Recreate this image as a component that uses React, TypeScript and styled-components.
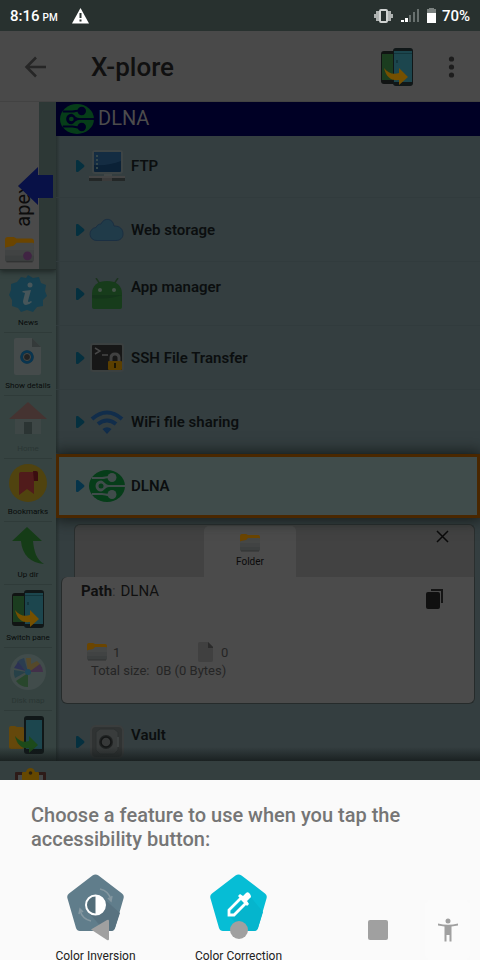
import React from "react";
import styled, { createGlobalStyle } from "styled-components";

const GlobalStyle = createGlobalStyle`
  *, *::before, *::after { box-sizing: border-box; }
  body { margin: 0; background: #fafafa; font-family: Roboto, "Noto Sans", sans-serif; }
  button { font: inherit; color: inherit; border: 0; padding: 0; margin: 0; background: none; }
  h1, h2, p { margin: 0; }
  svg { display: block; flex: none; }
`;

const Screen = styled.div`
  display: flex;
  flex-direction: column;
  height: 100vh;
  overflow: hidden;
`;

const StatusBar = styled.header`
  display: flex;
  align-items: center;
  flex: none;
  height: 31px;
  padding: 0 10px;
  background: #28312f;
  color: #fff;
  font-size: 14px;
  font-weight: 500;
`;

const Clock = styled.span`
  display: flex;
  align-items: baseline;
  gap: 3px;
  margin-right: 14px;
  font-size: 15px;
  small { font-size: 10px; }
`;

const StatusIcons = styled.div`
  display: flex;
  align-items: center;
  gap: 8px;
  margin-left: auto;
`;

const Charge = styled.span`
  margin-left: -2px;
  font-size: 15px;
`;

const AppBar = styled.div`
  display: flex;
  align-items: center;
  flex: none;
  height: 71px;
  padding: 0 20px 0 24px;
  background: #494949;
  box-shadow: inset 0 -1px 0 #424242;
  color: #222;
`;

const AppTitle = styled.h1`
  flex: 1;
  margin-left: 44px;
  font-size: 26px;
  font-weight: 500;
  line-height: 32px;
  color: #101010;
`;

const SwitchButton = styled.button`
  margin-right: 27px;
`;

const Main = styled.main`
  position: relative;
  display: grid;
  grid-template-columns: 56px 1fr;
  flex: 1;
  min-height: 0;
  overflow: hidden;
  &::after {
    content: "";
    position: absolute;
    inset: auto 0 0 0;
    height: 14px;
    background: linear-gradient(rgba(20, 26, 26, 0), rgba(20, 26, 26, 0.8));
  }
`;

const Sidebar = styled.nav`
  background: #364341;
  overflow: hidden;
`;

const OtherPane = styled.button`
  position: relative;
  display: flex;
  flex-direction: column;
  align-items: center;
  justify-content: flex-end;
  width: 39px;
  height: 167px;
  padding-bottom: 6px;
  gap: 10px;
  background: #4a4a4a;
  color: #0c0c0c;
`;

const PaneStrip = styled.div`
  position: relative;
  background: #2d3836;
  border-bottom: 1px solid #242d2b;
  height: 168px;
  box-shadow: 0 2px 5px #1f2726;
`;

const VerticalName = styled.span`
  writing-mode: vertical-rl;
  transform: rotate(180deg);
  font-size: 20px;
  line-height: 24px;
  margin-left: 6px;
`;

const PaneArrow = styled.span`
  position: absolute;
  left: 18px;
  top: 65px;
`;

const Tool = styled.button<{ $dim?: boolean }>`
  display: flex;
  flex-direction: column;
  align-items: center;
  width: 100%;
  height: 63px;
  padding-top: 5px;
  background: linear-gradient(#2f3b39, #2f3b39) center bottom / 48px 1px no-repeat;
  font-size: 8px;
  line-height: 12px;
  gap: 4px;
  white-space: nowrap;
  color: ${(p) => (p.$dim ? "#2a3634" : "#080b0b")};
`;

const Pane = styled.section`
  min-width: 0;
  overflow: hidden;
  background: linear-gradient(90deg, #273130, #343e40 4px);
`;

const PaneTitle = styled.h2`
  position: relative;
  z-index: 1;
  display: flex;
  align-items: center;
  gap: 4px;
  height: 34px;
  padding-left: 4px;
  background: #000025;
  color: #4c4c4c;
  font-size: 20px;
  font-weight: 400;
  line-height: 24px;
`;

const TitleText = styled.span`
  padding-bottom: 3px;
`;

const List = styled.div`
  margin-top: -2px;
`;

const Row = styled.button<{ $selected?: boolean }>`
  position: relative;
  display: flex;
  align-items: center;
  width: 100%;
  height: 64px;
  padding-left: ${(p) => (p.$selected ? "17px" : "20px")};
  text-align: left;
  color: #0b0e0f;
  background: ${(p) => (p.$selected ? "#404c4b" : "transparent")};
  border: ${(p) => (p.$selected ? "3px solid #4a2700" : "0 solid")};
  box-shadow: ${(p) => (p.$selected ? "0 0 14px 2px #141b1a" : "inset 0 -1px 0 #313b3d")};
`;

const RowIcon = styled.span`
  display: flex;
  justify-content: center;
  width: 36px;
  margin: 0 6px 0 4px;
`;

const RowText = styled.span`
  display: flex;
  flex-direction: column;
  font-size: 15px;
  font-weight: 600;
  line-height: 18px;
`;

const RowNote = styled.span`
  height: 14px;
`;

const Details = styled.section`
  padding: 6px 5px;
`;

const TabStrip = styled.div`
  display: flex;
  align-items: flex-start;
  height: 53px;
  margin-left: 13px;
  padding: 1px 25px 0 129px;
  background: #424242;
  border: 1px solid #2a2f2f;
  border-width: 1px 1px 0 1px;
  border-radius: 6px 6px 0 0;
`;

const Tab = styled.button`
  display: flex;
  flex-direction: column;
  align-items: center;
  gap: 3px;
  width: 92px;
  height: 51px;
  padding-top: 8px;
  border-radius: 5px 5px 0 0;
  background: #4b4b4b;
  font-size: 10px;
  line-height: 14px;
  color: #0a0a0a;
`;

const CloseButton = styled.button`
  margin: 4px 0 0 auto;
`;

const DetailsBody = styled.div`
  height: 127px;
  padding: 4px 27px 0 19px;
  background: #4b4b4b;
  border: 1px solid #262b2b;
  border-top: 0;
  border-radius: 6px 0 6px 6px;
  color: #252525;
  font-size: 13px;
`;

const PathRow = styled.div`
  display: flex;
  justify-content: space-between;
  font-size: 15px;
  line-height: 20px;
  height: 36px;
`;

const Path = styled.p`
  color: #101010;
  span { color: #303030; margin-right: 1px; }
`;

const Counts = styled.div`
  display: grid;
  grid-template-columns: 110px 1fr;
  height: 20px;
  margin: 25px 0 0 6px;
`;

const Count = styled.span`
  display: flex;
  align-items: center;
  gap: 6px;
`;

const Total = styled.p`
  margin-left: 10px;
  line-height: 18px;
`;

const BottomBar = styled.div`
  flex: none;
  height: 19px;
  padding: 7px 15px 0;
  background: #343f3f;
  overflow: hidden;
`;

const Sheet = styled.section`
  position: relative;
  flex: none;
  height: 180px;
  padding-top: 23px;
  background: #fafafa;
  overflow: hidden;
`;

const SheetTitle = styled.h2`
  padding: 0 31px;
  font-size: 20px;
  font-weight: 500;
  line-height: 24px;
  color: #757575;
`;

const Choices = styled.div`
  display: grid;
  grid-template-columns: repeat(3, 1fr);
  padding: 23px 27px 0 24px;
`;

const Choice = styled.button`
  display: flex;
  flex-direction: column;
  align-items: center;
  gap: 16px;
  font-size: 12px;
  line-height: 16px;
  color: #212121;
`;

const NavBar = styled.nav`
  position: absolute;
  inset: auto 0 0 0;
  display: grid;
  grid-template-columns: repeat(3, 1fr);
  align-items: center;
  justify-items: center;
  height: 60px;
  padding: 0 33px 0 31px;
`;

const AccessButton = styled.button`
  position: absolute;
  right: 10px;
  bottom: 0;
  display: flex;
  align-items: center;
  justify-content: center;
  width: 45px;
  height: 60px;
  border-radius: 6px;
  background: #fbfbfb;
`;

const PhonesIcon = ({ size = 38 }: { size?: number }) => (
  <svg width={size} height={size} viewBox="0 0 38 38">
    <rect x="3" y="3" width="20" height="33" rx="3" fill="#111413" />
    <rect x="4" y="6" width="18" height="26" fill="#1b3d1f" />
    <rect x="15" y="0" width="20" height="38" rx="3" fill="#101718" />
    <rect x="16" y="3" width="18" height="31" fill="#1c464e" />
    <path d="M16 6h18v-1H16zM18 12h2v3h-2z" fill="#13353b" />
    <path d="M6 20c4 5 9 7 15 5v-5l9 9-9 8v-5C13 33 8 29 6 20z" fill="#755000" />
  </svg>
);

const DlnaIcon = ({ w, h, bg }: { w: number; h: number; bg: string }) => (
  <svg width={w} height={h} viewBox="0 0 36 32" preserveAspectRatio="none">
    <ellipse cx="18" cy="16" rx="18" ry="16" fill="#063d19" />
    <g fill="none" stroke={bg} strokeWidth="2">
      <path d="M3 8h10c3 0 4-1 7-1" />
      <path d="M3 24h10c3 0 4 1 7 1" />
      <path d="M15 16h21" />
    </g>
    <g fill={bg}>
      <circle cx="23" cy="7.500" r="4.500" />
      <circle cx="23" cy="24.500" r="4.500" />
      <path d="M12 10.500a5.500 5.500 0 1 0 0 11c3 0 4-4.500 8-4.500v-2c-4 0-5-4.500-8-4.500z" />
    </g>
    <circle cx="12" cy="16" r="2.500" fill="#063d19" />
  </svg>
);

const FolderIcon = ({ w = 20, mark }: { w?: number; mark?: boolean }) => (
  <svg width={w} height={w * 0.9} viewBox="0 0 20 18">
    <path d="M0 2q0-2 2-2h4l2 1h10q2 0 2 2v6H0z" fill="#6b4500" />
    <path d="M0 8q0-1 1-1l5-1 2-2h11q1 0 1 1v10q0 2-2 2H2q-2 0-2-2z" fill="#454746" />
    <path d="M0 9h20v6q0 2-2 2H2q-2 0-2-2z" fill="#414343" />
    <path d="M0 13h20v2q0 2-2 2H2q-2 0-2-2z" fill="#3c3f3f" />
    <path d="M1 17h18" stroke="#313333" strokeWidth="1" />
    {mark && <circle cx="15.500" cy="13" r="3" fill="#402443" />}
  </svg>
);

const FileIcon = () => (
  <svg width="18" height="20" viewBox="0 0 18 20">
    <path d="M1 2q0-2 2-2h8l5 5v13q0 2-2 2H3q-2 0-2-2z" fill="#404040" />
    <path d="M11 0l5 5v1h-5z" fill="#2b2b2b" />
  </svg>
);

const NewsIcon = () => (
  <svg width="38" height="38" viewBox="0 0 38 38">
    <path d="M19 0l5 3 6-1 2 6 5 2-1 6 2 5-4 4v6l-6 1-4 5-6-2-6 2-3-4-6-2v-6l-3-5 2-5 0-6 6-2 4-5 5 1z" fill="#163f4f" />
    <g fill="#47565a">
      <circle cx="21" cy="10" r="2.500" />
      <path d="M14 16l8-1-3 11q0 2 3 0l1 1q-3 3-6 3t-3-4l2-8-3-1z" />
    </g>
  </svg>
);

const DetailsIcon = () => (
  <svg width="38" height="38" viewBox="0 0 38 38">
    <path d="M5 2q0-2 2-2h16l9 9v26q0 2-2 2H7q-2 0-2-2z" fill="#454b4b" />
    <path d="M23 0l9 9h-9z" fill="#343a3a" />
    <circle cx="18" cy="19" r="6.500" fill="#292c2d" />
    <circle cx="18" cy="19" r="5.500" fill="none" stroke="#083550" strokeWidth="2.500" />
    <circle cx="18" cy="19" r="3.500" fill="#222" stroke="#454b4b" />
  </svg>
);

const HomeIcon = () => (
  <svg width="38" height="38" viewBox="0 0 38 38">
    <path d="M6 17h26v16H6z" fill="#3e4746" />
    <path d="M19 1l19 17H0z" fill="#453331" />
    <path d="M15 21h8v12h-8z" fill="#2b3433" />
  </svg>
);

const BookmarkIcon = () => (
  <svg width="38" height="38" viewBox="0 0 38 38">
    <circle cx="19" cy="19" r="19" fill="#50430f" />
    <path d="M11 8h14v22l-7-5-8 6V10q0-2 2-2z" fill="#501b1b" />
    <path d="M24 7h3q2 0 2 2v8h-4z" fill="#3b0d10" />
  </svg>
);

const UpIcon = () => (
  <svg width="38" height="38" viewBox="0 0 38 38">
    <path d="M18 0l15 14h-9c1 10 3 18 11 23C22 36 13 28 12 14H3z" fill="#153c17" />
  </svg>
);

const DiskMapIcon = () => (
  <svg width="38" height="38" viewBox="0 0 38 38">
    <circle cx="19" cy="19" r="18" fill="#414c4b" />
    <path d="M19 19L8 9A15 15 0 0 1 15 5z" fill="#2b3d50" />
    <path d="M19 19L17 5l5 0 0 6 6-3 3 3-8 7z" fill="#55492a" />
    <path d="M20 19h14a15 15 0 0 0-3-8z" fill="#42304a" />
    <path d="M19 20v14A15 15 0 0 1 7 28z" fill="#28462c" />
    <path d="M17 19L6 25a15 15 0 0 1-1-8z" fill="#274148" />
    <path d="M17 18L5 15l4-6z" fill="#2c3154" />
    <circle cx="19" cy="19" r="3" fill="#1f4759" />
  </svg>
);

const CloneIcon = () => (
  <svg width="38" height="38" viewBox="0 0 38 38">
    <rect x="15" y="0" width="20" height="38" rx="3" fill="#101718" />
    <rect x="17" y="4" width="16" height="29" fill="#1c464e" />
    <path d="M0 12q0-2 2-2h4l2 1h5q2 0 2 2v18q0 2-2 2H2q-2 0-2-2z" fill="#65480b" />
    <path d="M6 20c4 5 9 7 14 5v-5l9 9-9 8v-5C13 33 8 29 6 20z" fill="#1c4a1a" />
  </svg>
);

const FtpIcon = () => (
  <svg width="36" height="32" viewBox="0 0 36 32">
    <rect x="3" y="0" width="31" height="24" rx="3" fill="#3d4445" />
    <rect x="5" y="2" width="27" height="20" rx="1" fill="#0b2136" />
    <path d="M5 3q0-1 1-1h25q1 0 1 1v8q-12 5-27 4z" fill="#142c42" />
    <path d="M8 5v14" stroke="#34474b" strokeWidth="2" strokeDasharray="2 2" />
    <path d="M15 24h8v4h-8z" fill="#434848" />
    <path d="M0 26h36v2H0z" fill="#444" />
    <path d="M0 28h36v3H0z" fill="#232727" />
    <path d="M13 28h10v3H13z" fill="#3b3b3b" />
  </svg>
);

const CloudIcon = () => (
  <svg width="36" height="24" viewBox="0 0 36 24">
    <path d="M8 22.500a6.500 6.500 0 0 1-1-13C8 7 10 6 12 6c3-7 12-6 13 2 6 0 9 3 9 8 0 4-3 6.500-7 6.500z" fill="#203b49" stroke="#1b2f42" />
  </svg>
);

const AndroidIcon = () => (
  <svg width="32" height="32" viewBox="0 0 32 32">
    <path d="M5 0l4 6M27 0l-4 6" stroke="#1d351f" strokeWidth="1.500" />
    <path d="M1 16C1 7 7 3 16 3s15 4 15 13v13q0 2-2 2H3q-2 0-2-2z" fill="#173c1b" />
    <path d="M1 17h30q-14 5-30 3z" fill="#14351a" />
    <circle cx="9" cy="12" r="2" fill="#46544a" />
    <circle cx="23" cy="12" r="2" fill="#46544a" />
  </svg>
);

const SshIcon = () => (
  <svg width="36" height="30" viewBox="0 0 36 30">
    <rect x="1" y="0" width="34" height="29" rx="3" fill="#3b4040" />
    <rect x="3" y="2" width="30" height="25" rx="1" fill="#171717" />
    <path d="M6 5l5 3-5 3M13 12h6" fill="none" stroke="#474747" strokeWidth="1.500" />
    <path d="M22 19v-4q0-4 4-4t4 4v4" fill="none" stroke="#414141" strokeWidth="3" />
    <rect x="19" y="18" width="14" height="9" rx="1" fill="#5b3f00" />
    <path d="M25 20h2v5h-2z" fill="#1b1604" />
  </svg>
);

const WifiIcon = () => (
  <svg width="34" height="24" viewBox="0 0 34 24">
    <g fill="none" stroke="#112d4b" strokeWidth="4">
      <path d="M2 9Q17-4 32 9" />
      <path d="M8 14q9-7 18 0" />
    </g>
    <path d="M12.500 19q4.500-3.500 9 0L17 24z" fill="#112d4b" />
  </svg>
);

const VaultIcon = () => (
  <svg width="34" height="34" viewBox="0 0 34 34">
    <rect x="1" y="1" width="32" height="32" rx="5" fill="#303333" stroke="#3a3d3d" strokeWidth="2" />
    <path d="M6 7l4-3h14l4 3v18l-4 4H10l-4-4z" fill="#393c3c" stroke="#2d3131" />
    <circle cx="16" cy="17" r="7" fill="#202323" />
    <circle cx="16" cy="17" r="5" fill="#373939" stroke="#141616" strokeWidth="1.500" />
    <path d="M28 12v10" stroke="#454848" strokeWidth="1.500" />
  </svg>
);

const Chevron = ({ bright }: { bright?: boolean }) => (
  <svg width="9" height="12" viewBox="0 0 9 12">
    <path d="M1 0h1l6 5q1 1 0 2l-6 5H1q-1 0-1-1V1q0-1 1-1z" fill={bright ? "#06344a" : "#05303f"} />
  </svg>
);

const Pentagon = ({ fill, children }: { fill: string; children: React.ReactNode }) => (
  <svg width="57" height="58" viewBox="0 0 57 58">
    <path d="M25.500 1.500q3-2 6 0L55 19.500q2.500 2 1.500 5L48 54q-1 3-4 3H13q-3 0-4-3L.500 24.500q-1-3 1.500-5z" fill={fill} />
    {children}
  </svg>
);

const tools = [
  { name: "News", icon: <NewsIcon /> },
  { name: "Show details", icon: <DetailsIcon /> },
  { name: "Home", icon: <HomeIcon />, dim: true },
  { name: "Bookmarks", icon: <BookmarkIcon /> },
  { name: "Up dir", icon: <UpIcon /> },
  { name: "Switch pane", icon: <PhonesIcon /> },
  { name: "Disk map", icon: <DiskMapIcon />, dim: true },
  { name: "Clone folder", icon: <CloneIcon /> },
];

const entries = [
  { name: "FTP", icon: <FtpIcon /> },
  { name: "Web storage", icon: <CloudIcon /> },
  { name: "App manager", icon: <AndroidIcon />, note: true },
  { name: "SSH File Transfer", icon: <SshIcon /> },
  { name: "WiFi file sharing", icon: <WifiIcon /> },
  { name: "DLNA", icon: <DlnaIcon w={36} h={32} bg="#404c4b" />, selected: true },
];

type EntryProps = { name: string; icon: React.ReactNode; note?: boolean; selected?: boolean };

const Entry = ({ name, icon, note, selected }: EntryProps) => (
  <Row $selected={selected}>
    <Chevron bright={selected} />
    <RowIcon>{icon}</RowIcon>
    <RowText>
      {name}
      {note && <RowNote />}
    </RowText>
  </Row>
);

export default function App() {
  return (
    <>
      <GlobalStyle />
      <Screen>
        <StatusBar>
          <Clock>8:16 <small>PM</small></Clock>
          <svg width="17" height="16" viewBox="0 0 17 16">
            <path d="M8.500 0L17 15.500H0z" fill="#fff" />
            <path d="M7.500 5h2v5h-2zM7.500 11.500h2v2h-2z" fill="#28312f" />
          </svg>
          <StatusIcons>
            <svg width="19" height="14" viewBox="0 0 19 14">
              <path d="M0 5h2V2h3v10H2V9H0zM19 5h-2V2h-3v10h3V9h2z" fill="#aeb2b1" />
              <rect x="6" y="1" width="7" height="12" rx="1" fill="none" stroke="#d0d3d2" strokeWidth="2" />
            </svg>
            <svg width="18" height="14" viewBox="0 0 18 14">
              <path d="M0 11h3v2H0zM4 9h3v4H4z" fill="#fff" />
              <path d="M8 6h2v7H8zM12 3h2v10h-2zM16 0h2v13h-2z" fill="#68706e" />
            </svg>
            <svg width="9" height="15" viewBox="0 0 9 15">
              <path d="M2 0h5v1h2v5H0V1h2z" fill="#7b8280" />
              <path d="M0 5h9v10H0z" fill="#fff" />
            </svg>
            <Charge>70%</Charge>
          </StatusIcons>
        </StatusBar>

        <AppBar>
          <button aria-label="Back">
            <svg width="23" height="22" viewBox="0 0 23 22" fill="none" stroke="#262626" strokeWidth="2.500">
              <path d="M22 11H3M12 1.500L2.500 11l9.500 9.500" />
            </svg>
          </button>
          <AppTitle>X-plore</AppTitle>
          <SwitchButton aria-label="Switch pane"><PhonesIcon /></SwitchButton>
          <button aria-label="More options">
            <svg width="17" height="22" viewBox="0 0 17 22" fill="#1d1d1d">
              <circle cx="8.500" cy="3" r="2.600" />
              <circle cx="8.500" cy="11" r="2.600" />
              <circle cx="8.500" cy="19" r="2.600" />
            </svg>
          </button>
        </AppBar>

        <Main>
          <Sidebar>
            <PaneStrip>
              <OtherPane>
                <VerticalName>apex</VerticalName>
                <FolderIcon w={29} mark />
                <PaneArrow>
                  <svg width="35" height="38" viewBox="0 0 35 38">
                    <path d="M0 19L20 0v8h15v23H20v7z" fill="#081147" />
                  </svg>
                </PaneArrow>
              </OtherPane>
            </PaneStrip>
            {tools.map((t) => (
              <Tool key={t.name} $dim={t.dim}>
                {t.icon}
                {t.name}
              </Tool>
            ))}
          </Sidebar>

          <Pane>
            <PaneTitle>
              <DlnaIcon w={34} h={30} bg="#000025" />
              <TitleText>DLNA</TitleText>
            </PaneTitle>
            <List>
              {entries.map((e) => <Entry key={e.name} {...e} />)}
              <Details>
                <TabStrip>
                  <Tab>
                    <FolderIcon />
                    Folder
                  </Tab>
                  <CloseButton aria-label="Close">
                    <svg width="13" height="13" viewBox="0 0 13 13" stroke="#0a0a0a" strokeWidth="1.500">
                      <path d="M1 1l11 11M12 1L1 12" />
                    </svg>
                  </CloseButton>
                </TabStrip>
                <DetailsBody>
                  <PathRow>
                    <Path><b>Path</b><span>:</span> DLNA</Path>
                    <button aria-label="Copy path">
                      <svg width="24" height="24" viewBox="0 0 24 24">
                        <rect x="3" y="5" width="14" height="17" rx="2" fill="#101010" />
                        <path d="M8 3h11v13" fill="none" stroke="#141414" strokeWidth="2" />
                      </svg>
                    </button>
                  </PathRow>
                  <Counts>
                    <Count><FolderIcon /> 1</Count>
                    <Count><FileIcon /> 0</Count>
                  </Counts>
                  <Total>Total size:&nbsp; 0B (0 Bytes)</Total>
                </DetailsBody>
              </Details>
              <Entry name="Vault" icon={<VaultIcon />} note />
            </List>
          </Pane>
        </Main>

        <BottomBar>
          <svg width="31" height="30" viewBox="0 0 31 30">
            <rect x="0" y="4" width="31" height="26" rx="1" fill="#2d1b18" />
            <rect x="3" y="7" width="25" height="23" fill="#454848" />
            <path d="M7 5q0-1 1-1h3q1-4 4.500-4T20 4h3q1 0 1 1v7H7z" fill="#664800" />
            <circle cx="15.500" cy="5" r="1.800" fill="#2a2010" />
          </svg>
        </BottomBar>

        <Sheet>
          <SheetTitle>Choose a feature to use when you tap the accessibility button:</SheetTitle>
          <Choices>
            <Choice>
              <Pentagon fill="#607d8b">
                <path d="M36 24l17 15-5 15q-1 3-4 3H38L21 38z" fill="#587280" />
                <circle cx="28.500" cy="31" r="9.500" fill="#536d79" stroke="#fff" strokeWidth="2" />
                <path d="M28.500 21.500a9.500 9.500 0 0 1 0 19z" fill="#fff" />
                <g fill="none" stroke="#8497a0" strokeWidth="1.500">
                  <path d="M33 15q9 2 11 11M41 24l3 3 1-5M24 47q-9-2-11-11M16 38l-3-3-1 5" />
                </g>
              </Pentagon>
              Color Inversion
            </Choice>
            <Choice>
              <Pentagon fill="#06bdd5">
                <path d="M39 21l14 17-5 16q-1 3-4 3H34L18 41z" fill="#05b5cd" />
                <path d="M19 40v-4l12-12 5 5-12 12h-5z" fill="none" stroke="#fff" strokeWidth="2.800" />
                <path d="M28 22l2-2 3 2 3-3q2-2 4 1t0 4l-3 3 2 3-2 2z" fill="#fff" />
              </Pentagon>
              Color Correction
            </Choice>
          </Choices>
          <NavBar>
            <button aria-label="Back">
              <svg width="20" height="22" viewBox="0 0 20 22">
                <path d="M1 10.500L17 1q2-1 2 1v18q0 2-2 1z" fill="#a0a0a0" />
              </svg>
            </button>
            <button aria-label="Home">
              <svg width="18" height="18" viewBox="0 0 18 18"><circle cx="9" cy="9" r="9" fill="#a0a0a0" /></svg>
            </button>
            <button aria-label="Recent apps">
              <svg width="20" height="20" viewBox="0 0 20 20"><rect width="20" height="20" rx="2" fill="#a0a0a0" /></svg>
            </button>
          </NavBar>
          <AccessButton aria-label="Accessibility">
            <svg width="20" height="24" viewBox="0 0 20 24" fill="#a0a0a0">
              <circle cx="10" cy="3" r="2.500" />
              <path d="M0 5.500q10 2.500 20 0v2l-6.500 1V23.500h-2V17h-3v6.500h-2V8.500L0 7.500z" />
            </svg>
          </AccessButton>
        </Sheet>
      </Screen>
    </>
  );
}
